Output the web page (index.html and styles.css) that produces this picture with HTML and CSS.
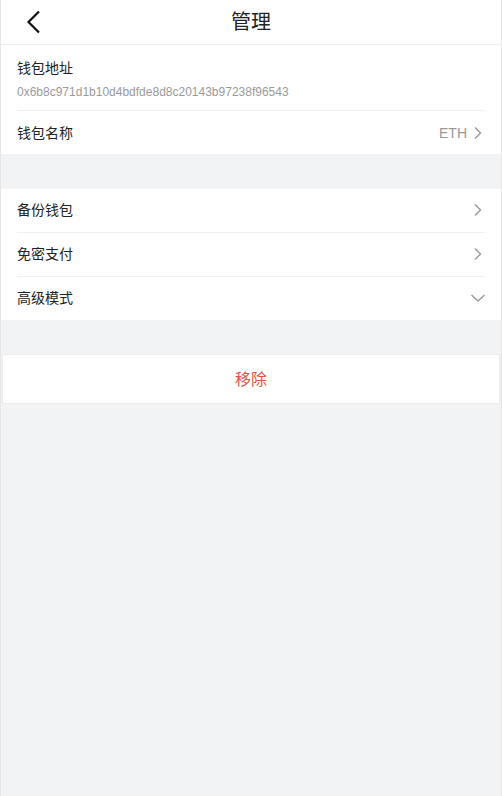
FILE: index.html
```html
<!DOCTYPE html>
<html lang="zh">
<head>
<meta charset="utf-8">
<link rel="stylesheet" href="styles.css">
</head>
<body>
<div class="page">
  <header class="header">
    <span class="back">
      <svg width="16" height="24" viewBox="0 0 16 24"><path d="M13 1.5 L2.5 12 L13 22.5" fill="none" stroke="#111" stroke-width="2.2"/></svg>
    </span>
    <h1 class="title">管理</h1>
  </header>

  <section class="group">
    <div class="row addr">
      <div class="label">钱包地址</div>
      <div class="address">0x6b8c971d1b10d4bdfde8d8c20143b97238f96543</div>
    </div>
    <div class="row">
      <div class="label">钱包名称</div>
      <div class="right"><span class="value">ETH</span>
        <svg class="arrow" width="10" height="14" viewBox="0 0 10 14"><path d="M2 1.5 L7.5 7 L2 12.5" fill="none" stroke="#999" stroke-width="1.4"/></svg>
      </div>
    </div>
  </section>

  <section class="group gap">
    <div class="row">
      <div class="label">备份钱包</div>
      <div class="right"><svg class="arrow" width="10" height="14" viewBox="0 0 10 14"><path d="M2 1.5 L7.5 7 L2 12.5" fill="none" stroke="#999" stroke-width="1.4"/></svg></div>
    </div>
    <div class="row">
      <div class="label">免密支付</div>
      <div class="right"><svg class="arrow" width="10" height="14" viewBox="0 0 10 14"><path d="M2 1.5 L7.5 7 L2 12.5" fill="none" stroke="#999" stroke-width="1.4"/></svg></div>
    </div>
    <div class="row">
      <div class="label">高级模式</div>
      <div class="right"><svg class="down" width="16" height="10" viewBox="0 0 16 10"><path d="M1.5 2 L8 8 L14.5 2" fill="none" stroke="#999" stroke-width="1.4"/></svg></div>
    </div>
  </section>

  <div class="remove">移除</div>
</div>
</body>
</html>
```
FILE: styles.css
```css
html, body {
  margin: 0;
  padding: 0;
  height: 100%;
}
body {
  font-family: "Liberation Sans", "Noto Sans CJK SC", sans-serif;
  background: #f2f3f5;
  color: #222;
}
.page {
  min-height: 796px;
  box-sizing: border-box;
  border-left: 1px solid #e6e6e6;
  border-right: 1px solid #e6e6e6;
  background: #f2f3f5;
}
.header {
  height: 44px;
  background: #fff;
  border-bottom: 1px solid #eeeeee;
  display: flex;
  align-items: center;
  justify-content: center;
  position: relative;
}
.back {
  position: absolute;
  left: 25px;
  top: 10px;
  display: flex;
}
.title {
  margin: 0;
  font-size: 20px;
  font-weight: normal;
  color: #222;
  line-height: 44px;
}
.group {
  background: #fff;
  padding: 0 16px;
}
.group.gap {
  margin-top: 35px;
}
.row {
  height: 43px;
  display: flex;
  align-items: center;
  justify-content: space-between;
  border-bottom: 1px solid #f0f0f0;
}
.group.gap .row {
  padding-bottom: 2px;
  box-sizing: border-box;
  height: 44px;
}
.group.gap .row:last-child {
  height: 43px;
}
.row:last-child {
  border-bottom: none;
}
.row.addr {
  height: 66px;
  flex-direction: column;
  align-items: flex-start;
  justify-content: flex-start;
  padding-top: 13px;
  box-sizing: border-box;
}
.label {
  font-size: 14px;
  color: #222;
  line-height: 20px;
}
.address {
  font-size: 12px;
  color: #9a9a9a;
  margin-top: 6px;
  line-height: 17px;
}
.right {
  display: flex;
  align-items: center;
  gap: 6px;
  padding-right: 2px;
}
.value {
  font-size: 14px;
  color: #999;
}
.arrow {
  display: block;
}
.down {
  display: block;
  margin-right: -3px;
}
.remove {
  margin: 34px 1px 0 1px;
  height: 48px;
  padding-bottom: 3px;
  box-sizing: border-box;
  height: 50px;
  background: #fff;
  border: 1px solid #ececec;
  display: flex;
  align-items: center;
  justify-content: center;
  font-size: 16px;
  color: #e0544a;
}
```
